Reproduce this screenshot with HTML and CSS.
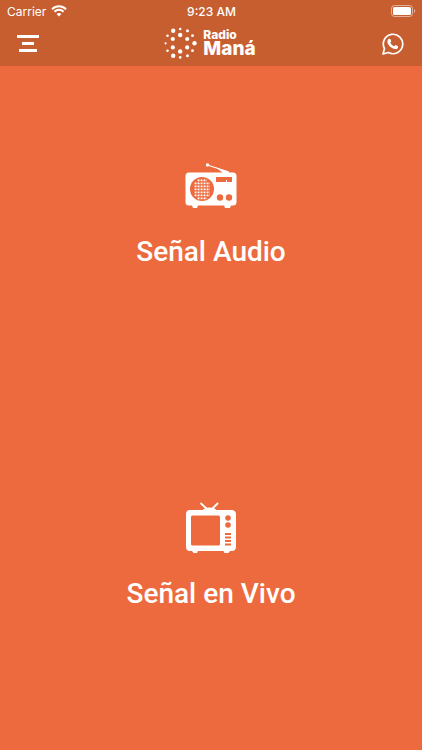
FILE: index.html
```html
<!DOCTYPE html>
<html lang="es">
<head>
    <meta charset="UTF-8">
    <meta name="viewport" content="width=device-width, initial-scale=1.0">
    <title>Radio Maná</title>
    <link rel="stylesheet" href="styles.css">
</head>
<body>
    <header>
        <div class="status-bar">
            <div class="carrier">
                <span>Carrier</span>
                <svg width="16" height="12" viewBox="0 0 16 12" fill="none" stroke="#fff" stroke-width="2">
                    <path d="M1 4.2C5 .2 11 .2 15 4.2"/>
                    <path d="M3.4 6.8C6 4.2 10 4.2 12.6 6.8"/>
                    <path d="M8 11.5L5.6 9C7 7.7 9 7.7 10.4 9Z" fill="#fff" stroke="none"/>
                </svg>
            </div>
            <div class="time">9:23 AM</div>
            <div class="battery">
                <svg width="25" height="12" viewBox="0 0 25 12">
                    <rect x=".5" y=".5" width="21" height="11" rx="3" fill="none" stroke="#fff" stroke-opacity=".5"/>
                    <rect x="2" y="2" width="18" height="8" rx="1.6" fill="#fff"/>
                    <path d="M23 4c1.6.6 1.6 3.4 0 4z" fill="#fff" fill-opacity=".5"/>
                </svg>
            </div>
        </div>

        <nav class="nav-bar">
            <button class="icon-btn" aria-label="Menú">
                <svg width="24" height="18" viewBox="0 0 24 18" fill="#fff">
                    <rect x="1" y="0" width="22" height="3"/>
                    <rect x="6" y="7" width="12" height="3"/>
                    <rect x="3" y="14" width="18" height="3"/>
                </svg>
            </button>
            <a class="logo" href="#">
                <svg width="34" height="32" viewBox="0 0 34 32" fill="#fff">
                    <circle cx="9.200" cy="3.700" r="2.200"/>
                    <circle cx="16.200" cy="2" r="1.300"/>
                    <circle cx="23.500" cy="3.700" r="1.500"/>
                    <circle cx="16.200" cy="8" r="2.200"/>
                    <circle cx="3.500" cy="8.700" r="1.300"/>
                    <circle cx="8.800" cy="12" r="2.100"/>
                    <circle cx="23.200" cy="12" r="2.100"/>
                    <circle cx="28.500" cy="8.700" r="1.400"/>
                    <circle cx="1.600" cy="16.300" r="1.100"/>
                    <circle cx="30.500" cy="16.300" r="2.200"/>
                    <circle cx="8.800" cy="20.400" r="2.100"/>
                    <circle cx="23.200" cy="20.400" r="2.100"/>
                    <circle cx="3.500" cy="23.700" r="1.300"/>
                    <circle cx="28.500" cy="23.700" r="1.400"/>
                    <circle cx="16.200" cy="24.400" r="2.200"/>
                    <circle cx="9.200" cy="28.700" r="2.200"/>
                    <circle cx="23.500" cy="28.700" r="1.500"/>
                    <circle cx="16.200" cy="30.400" r="1.300"/>
                </svg>
                <span class="logo-text">
                    <span class="logo-small">Radio</span>
                    <span class="logo-big">Maná</span>
                </span>
            </a>
            <a class="icon-btn" href="#" aria-label="WhatsApp">
                <svg width="22" height="22" viewBox="0 0 22 22">
                    <path d="M1 21L2.5 15.6A9.7 9.7 0 1 1 6.4 19.5Z" fill="none" stroke="#fff" stroke-width="1.7" stroke-linejoin="round"/>
                    <path d="M7.6 5.8c.4 0 .6 0 .8.5l.8 2c.1.4-.6 1-.8 1.4.9 1.8 2.1 2.8 3.9 3.6.4-.3 1-1.3 1.4-1.2l2.2 1.1c.3.2.2 1.1-.1 1.7-.5.8-1.7 1.3-2.5 1.2-3.8-.5-7.2-3.7-7.9-6.8-.2-1.3.5-3.1 1.5-3.5z" fill="#fff"/>
                </svg>
            </a>
        </nav>
    </header>

    <main>
        <a class="signal" href="#audio">
            <svg width="52" height="52" viewBox="0 0 52 52">
                <path d="M22.5 5L42 11.5" stroke="#fff" stroke-width="1.3"/>
                <path d="M31 7.5L44 11.5V13H38z" fill="#fff"/>
                <circle cx="22.5" cy="5" r="1.7" fill="#fff"/>
                <path d="M4 12.5H48Q51.5 12.5 51.5 16V42Q51.5 45.5 48 45.5H46L45 48H40L39 45.5H13L12 48H8L7 45.5H4Q.5 45.5 .5 42V16Q.5 12.5 4 12.5Z" fill="#fff"/>
                <g class="cutout">
                    <circle cx="17" cy="29" r="12"/>
                    <path d="M31 17H47V22H31z"/>
                    <circle cx="35" cy="37.5" r="3.2"/>
                    <circle cx="44" cy="37.5" r="3.2"/>
                </g>
                <rect x="41" y="20" width="1" height="2" fill="#fff"/>
                <g stroke="#fff" stroke-width="1.9" stroke-dasharray="1.9 1.1">
                    <path d="M12.6 20.4H22"/>
                    <path d="M9.6 23.4H25"/>
                    <path d="M9.6 26.4H25"/>
                    <path d="M9.6 29.4H25"/>
                    <path d="M9.6 32.4H25"/>
                    <path d="M9.6 35.4H25"/>
                    <path d="M12.6 38.4H22"/>
                </g>
            </svg>
            <span>Señal Audio</span>
        </a>
        <a class="signal" href="#vivo">
            <svg width="52" height="52" viewBox="0 0 52 52">
                <path d="M16 1.5L22 7M32.5 1.5L27 7" stroke="#fff" stroke-width="1.8" stroke-linecap="round"/>
                <path d="M17.5 8.5C19 4.5 30 4.5 31.5 8.5z" fill="#fff"/>
                <path d="M4.5 8H46.5Q51 8 51 12.5V44.5Q51 49 46.5 49H45L43.5 51H39.5L38.5 49H13L12 51H8.5L7 49H4.5Q1 49 1 44.5V12.5Q1 8 4.5 8Z" fill="#fff"/>
                <g class="cutout">
                    <rect x="6" y="13.5" width="29" height="30" rx="1.5"/>
                    <circle cx="43" cy="16" r="2.8"/>
                    <circle cx="43" cy="23" r="2.8"/>
                    <rect x="40" y="31" width="6" height="2"/>
                    <rect x="40" y="34.5" width="6" height="2"/>
                    <rect x="40" y="38" width="6" height="2"/>
                    <rect x="40" y="41.5" width="6" height="2"/>
                </g>
            </svg>
            <span>Señal en Vivo</span>
        </a>
    </main>
</body>
</html>
```

FILE: styles.css
```css
* {
    box-sizing: border-box;
}
body {
    display: flex;
    flex-direction: column;
    min-height: 100vh;
    margin: 0;
    background: #ec6a3d;
    color: #fff;
    font-family: Roboto, sans-serif;
}
svg {
    display: block;
}
header {
    background: #c75e2f;
    font-family: Inter, sans-serif;
}
.status-bar {
    display: grid;
    grid-template-columns: 1fr auto 1fr;
    align-items: center;
    height: 22px;
    padding: 0 6px 0 7px;
    font-size: 12px;
}
.carrier {
    display: flex;
    align-items: center;
    gap: 5px;
}
.time {
    font-weight: 500;
}
.battery {
    justify-self: end;
}
.nav-bar {
    display: grid;
    grid-template-columns: 1fr auto 1fr;
    align-items: center;
    height: 44px;
    padding: 0 18px 0 16px;
}
.icon-btn {
    justify-self: start;
    padding: 0;
    border: none;
    background: none;
    cursor: pointer;
}
.icon-btn:last-child {
    justify-self: end;
}
.logo {
    display: flex;
    align-items: center;
    gap: 5px;
    padding-bottom: 2px;
    color: #fff;
    text-decoration: none;
}
.logo-text {
    display: flex;
    flex-direction: column;
    font-weight: 800;
}
.logo-small {
    font-size: 12px;
    line-height: 12px;
}
.logo-big {
    font-size: 19px;
    line-height: 16px;
}
main {
    flex: 1;
    display: flex;
    flex-direction: column;
}
.signal {
    flex: 1;
    display: flex;
    flex-direction: column;
    align-items: center;
    justify-content: center;
    gap: 22px;
    padding-bottom: 44px;
    color: #fff;
    font-size: 28px;
    font-weight: 500;
    line-height: 36px;
    text-decoration: none;
}
.cutout {
    fill: #ec6a3d;
}
```
